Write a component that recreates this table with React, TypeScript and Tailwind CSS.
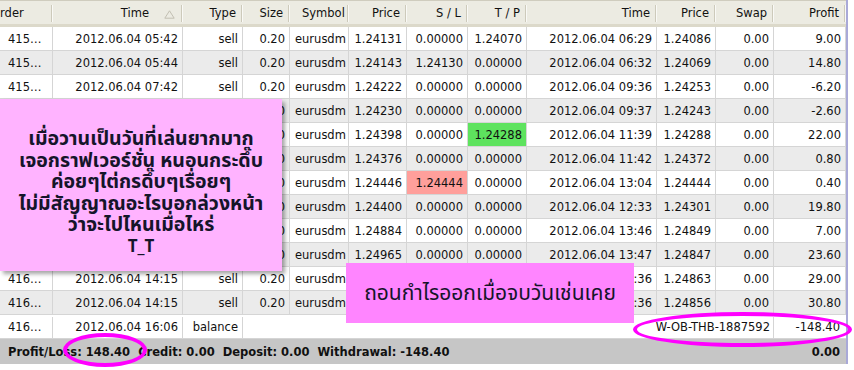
import React from 'react';

type Col = { w: string; align: 'left' | 'right' };

const cols: Col[] = [
  { w: 'w-[53px]', align: 'left' },
  { w: 'w-[130px]', align: 'right' },
  { w: 'w-[60px]', align: 'right' },
  { w: 'w-[47px]', align: 'right' },
  { w: 'w-[59px]', align: 'left' },
  { w: 'w-[58px]', align: 'right' },
  { w: 'w-[61px]', align: 'right' },
  { w: 'w-[59px]', align: 'right' },
  { w: 'w-[130px]', align: 'right' },
  { w: 'w-[59px]', align: 'right' },
  { w: 'w-[58px]', align: 'right' },
  { w: 'w-[72px]', align: 'right' },
];

const headers = ['Order', 'Time', 'Type', 'Size', 'Symbol', 'Price', 'S / L', 'T / P', 'Time', 'Price', 'Swap', 'Profit'];

const rows: string[][] = [
  ['415…', '2012.06.04 05:42', 'sell', '0.20', 'eurusdm', '1.24131', '0.00000', '1.24070', '2012.06.04 06:29', '1.24086', '0.00', '9.00'],
  ['415…', '2012.06.04 05:44', 'sell', '0.20', 'eurusdm', '1.24143', '1.24130', '0.00000', '2012.06.04 06:32', '1.24069', '0.00', '14.80'],
  ['415…', '2012.06.04 07:42', 'sell', '0.20', 'eurusdm', '1.24222', '0.00000', '0.00000', '2012.06.04 09:36', '1.24253', '0.00', '-6.20'],
  ['415…', '2012.06.04 08:51', 'sell', '0.20', 'eurusdm', '1.24230', '0.00000', '0.00000', '2012.06.04 09:37', '1.24243', '0.00', '-2.60'],
  ['415…', '2012.06.04 09:58', 'sell', '0.20', 'eurusdm', '1.24398', '0.00000', '1.24288', '2012.06.04 11:39', '1.24288', '0.00', '22.00'],
  ['415…', '2012.06.04 10:12', 'sell', '0.20', 'eurusdm', '1.24376', '0.00000', '0.00000', '2012.06.04 11:42', '1.24372', '0.00', '0.80'],
  ['416…', '2012.06.04 11:45', 'sell', '0.20', 'eurusdm', '1.24446', '1.24444', '0.00000', '2012.06.04 13:04', '1.24444', '0.00', '0.40'],
  ['416…', '2012.06.04 12:20', 'sell', '0.20', 'eurusdm', '1.24400', '0.00000', '0.00000', '2012.06.04 12:33', '1.24301', '0.00', '19.80'],
  ['416…', '2012.06.04 13:02', 'sell', '0.20', 'eurusdm', '1.24884', '0.00000', '0.00000', '2012.06.04 13:46', '1.24849', '0.00', '7.00'],
  ['416…', '2012.06.04 13:05', 'sell', '0.20', 'eurusdm', '1.24965', '0.00000', '0.00000', '2012.06.04 13:47', '1.24847', '0.00', '23.60'],
  ['416…', '2012.06.04 14:15', 'sell', '0.20', 'eurusdm', '1.25008', '0.00000', '0.00000', '2012.06.04 15:36', '1.24863', '0.00', '29.00'],
  ['416…', '2012.06.04 14:15', 'sell', '0.20', 'eurusdm', '1.25010', '0.00000', '0.00000', '2012.06.04 15:36', '1.24856', '0.00', '30.80'],
];

// cells with SL / TP hit colouring: [row, col]
const hitCell = (r: number, c: number) => {
  if (r === 4 && c === 7) return 'bg-[#5ee35e]';
  if (r === 6 && c === 6) return 'bg-[#ff9f9b]';
  return '';
};

function SortArrow() {
  return (
    <svg width="11" height="9" viewBox="0 0 11 9" className="ml-[15px] mr-[1px]">
      <path d="M5.5 0.8 L10.2 8.2 L0.8 8.2 Z" fill="none" stroke="#c2bfb2" strokeWidth="1" />
    </svg>
  );
}

function Header() {
  return (
    <div className="flex h-[27px] border-t border-[#cfccbe] bg-[#ecebe2] shadow-[inset_0_-3px_0_#dcd9ca] text-[#111]">
      {headers.map((h, i) => (
        <div
          key={i}
          className={`${cols[i].w} relative flex items-center overflow-hidden ${
            i === 4 ? 'justify-start pl-[12px]' : i === 0 ? 'justify-start' : 'justify-end pr-[7px]'
          }`}
        >
          {i === 0 ? <span className="-ml-[9px]">{h}</span> : <span>{h}</span>}
          {i === 1 && <SortArrow />}
          <div className="absolute right-0 top-[4px] bottom-[5px] w-[2px] border-l border-[#cdcabb] bg-white/70" />
        </div>
      ))}
    </div>
  );
}

function Row({ data, idx }: { data: string[]; idx: number }) {
  return (
    <div className={`flex h-[24px] border-b border-[#d5d5d5] ${idx % 2 ? 'bg-[#ebebeb]' : 'bg-white'}`}>
      {data.map((v, c) => (
        <div
          key={c}
          className={`${cols[c].w} ${hitCell(idx, c)} flex items-center pt-[2px] border-r border-[#d5d5d5] whitespace-nowrap overflow-hidden ${
            c === 0 ? 'pl-[8px]' : cols[c].align === 'left' ? 'pl-[5px]' : 'justify-end pr-[4px]'
          }`}
        >
          {v}
        </div>
      ))}
    </div>
  );
}

export default function App() {
  return (
    <div className="relative w-[854px] h-[370px] overflow-hidden bg-white font-['DejaVu_Sans',sans-serif] text-[11.5px] text-[#111]">
      <div className="flex">
        <div className="w-[846px]">
          <Header />
          {rows.map((r, i) => (
            <Row key={i} data={r} idx={i} />
          ))}
          <div className="flex h-[24px] border-b border-[#d5d5d5] bg-white pt-[2px]">
            <div className="w-[53px] flex items-center pl-[8px] border-r border-[#d5d5d5]">416…</div>
            <div className="w-[130px] flex items-center justify-end pr-[4px] border-r border-[#d5d5d5]">2012.06.04 16:06</div>
            <div className="w-[60px] flex items-center justify-end pr-[4px] border-r border-[#d5d5d5]">balance</div>
            <div className="w-[531px] flex items-center justify-end pr-[3px] border-r border-[#d5d5d5]">W-OB-THB-1887592</div>
            <div className="w-[72px] flex items-center justify-end pr-[6px]">-148.40</div>
          </div>
          <div className="flex h-[25px] items-center justify-between bg-[#c6c6c6] pl-[8px] pr-[6px] pt-[2px] font-bold">
            <span className="whitespace-pre">Profit/Loss: 148.40  Credit: 0.00  Deposit: 0.00  Withdrawal: -148.40</span>
            <span>0.00</span>
          </div>
        </div>
        <div className="w-[2px] h-[364px] bg-[#a9a9d8]" />
      </div>

      {/* annotation: pink note */}
      <div className="absolute left-0 top-[99px] w-[282px] h-[172px] bg-[#ffb3ff] shadow-[3px_3px_4px_rgba(0,0,0,0.35)] pt-[30px] text-center font-bold text-[19.5px] leading-[21.5px] text-[#15152a] font-['Tahoma','Noto_Sans_Thai','DejaVu_Sans',sans-serif]">
        <div>เมื่อวานเป็นวันที่เล่นยากมาก</div>
        <div>เจอกราฟเวอร์ชั่น หนอนกระดึ๊บ</div>
        <div>ค่อยๆไต่กรดึ๊บๆเรื่อยๆ</div>
        <div>ไม่มีสัญญาณอะไรบอกล่วงหน้า</div>
        <div>ว่าจะไปไหนเมื่อไหร่</div>
        <div className="text-[17px]">T_T</div>
      </div>

      <div className="absolute left-[346px] top-[263px] w-[288px] h-[60px] bg-[#ff85ff] flex items-center justify-center pt-[2px] text-[21px] text-[#15152a] font-['Tahoma','Noto_Sans_Thai','DejaVu_Sans',sans-serif]">
        ถอนกำไรออกเมื่อจบวันเช่นเคย
      </div>

      {/* magenta circles */}
      <div className="absolute left-[63px] top-[333px] w-[84px] h-[34px] rounded-[50%] border-[4px] border-[#ff00ff]" />
      <div className="absolute left-[633px] top-[312px] w-[219px] h-[35px] rounded-[50%] border-[4px] border-[#ff00ff]" />
    </div>
  );
}
